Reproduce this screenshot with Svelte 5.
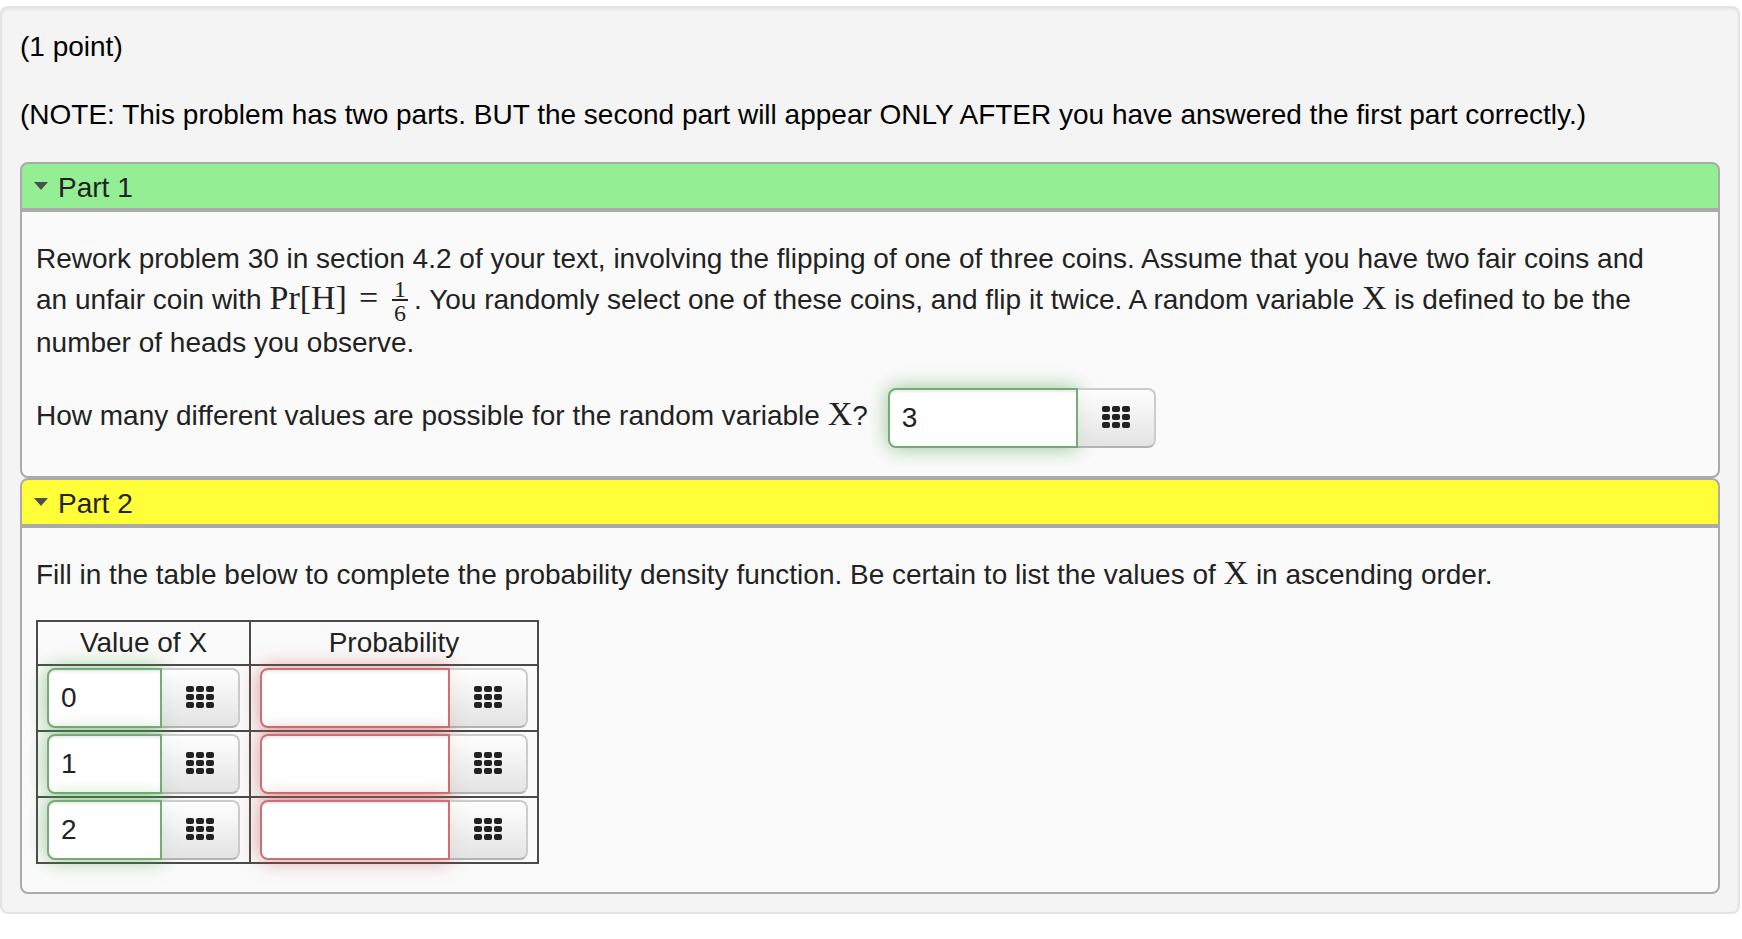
<script>
  let openParts = $state([true, true])
  let count = $state("3")
  let rows = $state([
    { value: "0", probability: "" },
    { value: "1", probability: "" },
    { value: "2", probability: "" }
  ])
</script>

{#snippet keypad()}
  <svg class="keypad" width="28" height="22" viewBox="0 0 28 22" aria-hidden="true">
    {#each [0, 8, 16] as y}
      {#each [0, 10, 20] as x}
        <rect {x} {y} width="8" height="6" rx="2" />
      {/each}
    {/each}
  </svg>
{/snippet}

<main class="problem">
  <p>(1 point)</p>
  <p>(NOTE: This problem has two parts. BUT the second part will appear ONLY AFTER you have answered the first part correctly.)</p>

  <section class="part">
    <button class="heading green" aria-expanded={openParts[0]} onclick={() => openParts[0] = !openParts[0]}>
      <span class="arrow"></span>Part 1
    </button>
    {#if openParts[0]}
      <div class="body">
        <p>
          Rework problem 30 in section 4.2 of your text, involving the flipping of one of three coins. Assume that you have two fair coins and an unfair coin with <span class="math">Pr[H]<span class="equals">=</span><span class="fraction"><span>1</span><span class="below">6</span></span></span>. You randomly select one of these coins, and flip it twice. A random variable <span class="math">X</span> is defined to be the number of heads you observe.
        </p>
        <div class="question">
          <label for="count">How many different values are possible for the random variable <span class="math">X</span>?</label>
          <span class="answer">
            <input id="count" class="correct" type="text" bind:value={count} />
            <button aria-label="Open equation editor">{@render keypad()}</button>
          </span>
        </div>
      </div>
    {/if}
  </section>

  <section class="part">
    <button class="heading yellow" aria-expanded={openParts[1]} onclick={() => openParts[1] = !openParts[1]}>
      <span class="arrow"></span>Part 2
    </button>
    {#if openParts[1]}
      <div class="body">
        <p>Fill in the table below to complete the probability density function. Be certain to list the values of <span class="math">X</span> in ascending order.</p>
        <table>
          <thead>
            <tr><th scope="col">Value of X</th><th scope="col">Probability</th></tr>
          </thead>
          <tbody>
            {#each rows as row, index}
              <tr>
                <td>
                  <span class="answer">
                    <input class="correct short" type="text" aria-label="Value of X, row {index + 1}" bind:value={row.value} />
                    <button aria-label="Open equation editor">{@render keypad()}</button>
                  </span>
                </td>
                <td>
                  <span class="answer">
                    <input class="incorrect" type="text" aria-label="Probability, row {index + 1}" bind:value={row.probability} />
                    <button aria-label="Open equation editor">{@render keypad()}</button>
                  </span>
                </td>
              </tr>
            {/each}
          </tbody>
        </table>
      </div>
    {/if}
  </section>
</main>

<style>
  :global(body) {
    background: #fff;
  }
  .problem, button, input {
    font-family: "Liberation Sans", Helvetica, Arial, sans-serif;
    font-size: 28px;
    line-height: 40px;
  }
  .problem {
    margin: 6px 2px 0 0;
    padding: 18px;
    background: #f4f4f4;
    border: 2px solid #e3e3e3;
    border-radius: 8px;
    box-shadow: inset 0 2px 2px rgba(0, 0, 0, 0.05);
    color: #000;
  }
  p {
    margin: 0;
    padding: 1px 0 27px;
  }
  .part {
    color: #222;
  }
  .heading {
    display: flex;
    align-items: center;
    width: 100%;
    height: 48px;
    padding: 4px 12px 0;
    border: 2px solid #aaa;
    border-radius: 8px 8px 0 0;
    color: #222;
    text-align: left;
  }
  .green {
    background: #94ef94;
  }
  .yellow {
    background: #fffe38;
  }
  .arrow {
    margin: 0 10px 4px 0;
    border: 7px solid transparent;
    border-top: 8px solid #4d4d4d;
    border-bottom: 0;
  }
  .body {
    padding: 27px 14px 28px;
    background: #fafafa;
    border: 2px solid #aaa;
    border-radius: 0 0 8px 8px;
  }
  .body p {
    padding: 0 32px 25px 0;
  }
  .math {
    font-family: "Liberation Serif", "Times New Roman", serif;
    font-size: 34px;
    line-height: 32px;
  }
  .equals {
    margin: 0 14px 0 12px;
  }
  .fraction {
    display: inline-flex;
    flex-direction: column;
    margin-right: 6px;
    font-size: 24px;
    line-height: 20px;
    text-align: center;
    vertical-align: middle;
  }
  .below {
    padding: 2px 2px 0;
    border-top: 2px solid #222;
  }
  .question {
    display: flex;
    align-items: center;
    gap: 20px;
  }
  .question label {
    padding-bottom: 4px;
  }
  .answer {
    display: flex;
  }
  .answer input {
    box-sizing: border-box;
    width: 190px;
    height: 60px;
    padding: 8px 12px;
    background: #fff;
    border: 2px solid;
    border-radius: 8px 0 0 8px;
    color: #222;
    outline: 0;
  }
  .answer .short {
    width: 115px;
  }
  .answer .correct {
    border-color: #76ab76;
    box-shadow: inset 0 2px 2px rgba(0, 0, 0, 0.08), 0 0 20px rgba(81, 163, 81, 0.6);
  }
  .answer .incorrect {
    border-color: #cb7173;
    box-shadow: inset 0 2px 2px rgba(0, 0, 0, 0.08), 0 0 20px rgba(191, 84, 84, 0.6);
  }
  .answer button {
    display: flex;
    align-items: center;
    justify-content: center;
    width: 78px;
    padding: 0 0 2px;
    background: linear-gradient(rgba(255, 255, 255, 0.8), rgba(222, 222, 222, 0.8));
    border: 2px solid #ccc;
    border-left: 0;
    border-bottom-color: #b3b3b3;
    border-radius: 0 8px 8px 0;
  }
  .keypad {
    fill: #222;
  }
  table {
    border-collapse: collapse;
  }
  th, td {
    border: 2px solid #4a4a4a;
    padding: 2px 9px;
  }
  th {
    padding: 1px 9px;
    font-weight: normal;
  }
</style>
